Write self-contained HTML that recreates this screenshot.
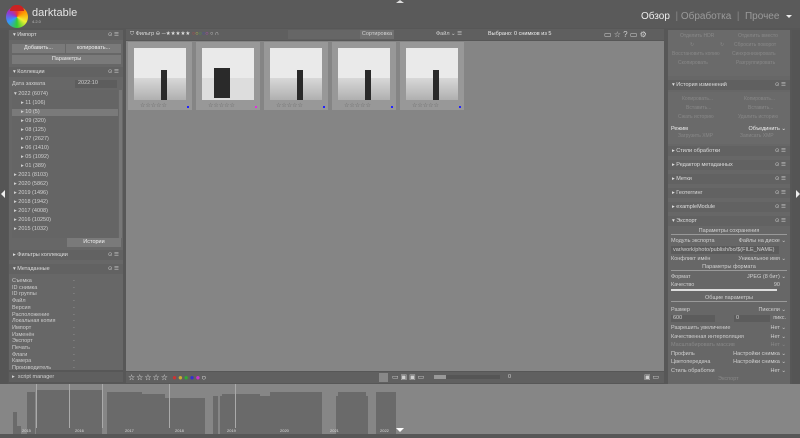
<!DOCTYPE html>
<html><head><meta charset="utf-8"><style>
*{margin:0;padding:0;box-sizing:border-box}
body{width:800px;height:438px;background:#575757;font-family:"Liberation Sans","DejaVu Sans",sans-serif;font-size:5.5px;color:#d0d0d0;position:relative;overflow:hidden;white-space:nowrap}
.a{position:absolute}
.hdr{left:0;top:0;width:800px;height:28px;background:#5a5a5a}
.lp{left:9px;top:30px;width:114px;height:340px;background:#676767}
.rp{left:668px;top:30px;width:122px;height:355px;background:#676767}
.ctr{left:126px;top:41px;width:538px;height:330px;background:#858585}
.sec{background:#626262;height:10px;width:100%;padding-left:4px;line-height:10px;color:#ddd}
.sec:after{content:"⊙ ☰";position:absolute;right:4px;top:0;color:#ccc}
.btn{background:#7a7a7a;height:9px;line-height:9px;text-align:center;color:#eee}
.th{top:42px;width:64px;height:68px;background:#989898}
.th .im{position:absolute;left:6px;top:6px;width:52px;height:52px;background:#eaeaea;overflow:hidden}
.th .im i{position:absolute;left:27px;top:22px;width:6px;height:30px;background:#2a2a2a}
.th .im b{position:absolute;left:0;top:30px;width:52px;height:22px;background:linear-gradient(#d8d8d8,#b0b0b0)}
.th s{position:absolute;left:12px;bottom:1px;text-decoration:none;color:#666;font-size:6px}
.th u{position:absolute;right:3px;bottom:2px;width:2px;height:2px;background:#22f}
.row{position:absolute;left:0;width:120px;height:7px;line-height:7px;padding-left:12px}
.tl{left:0;top:384px;width:800px;height:50px;background:#868686}
.bar{position:absolute;bottom:0;background:#6a6a6a}
.v{position:absolute;right:4px}
</style></head><body>
<div class="a hdr"></div>
<div class="a" style="left:6px;top:6px;width:22px;height:22px;border-radius:50%;background:conic-gradient(#e33,#f90,#ee3,#3c3,#39f,#93c,#e33)"></div>
<div class="a" style="left:10px;top:5px;width:14px;height:6px;background:#c22;border-radius:6px 6px 0 0"></div>
<div class="a" style="left:32px;top:7px;font-size:11px;color:#e4e4e4">darktable</div>
<div class="a" style="left:32px;top:19px;font-size:4px;color:#bbb">4.2.0</div>
<div class="a" style="left:641px;top:11px;font-size:10px;color:#eee">Обзор <span style="color:#888">&nbsp;|&nbsp;</span><span style="color:#9a9a9a">Обработка</span><span style="color:#888"> &nbsp;|&nbsp; </span><span style="color:#9a9a9a">Прочее</span></div>
<div class="a" style="left:786px;top:15px;border:3px solid transparent;border-top:3px solid #eee"></div>
<div class="a" style="left:396px;top:0;border:4px solid transparent;border-bottom:3px solid #ddd;border-top:0"></div>
<!-- filter bar -->
<div class="a" style="left:126px;top:29px;width:538px;height:11px;background:#5f5f5f"></div>
<div class="a" style="left:130px;top:31px;color:#ddd">⛉ Фильтр ⊖ ─★★★★★ <span style="color:#c44">○</span><span style="color:#cc4">○</span><span style="color:#4a4">○</span><span style="color:#44c">○</span><span style="color:#c4c">○</span> ○ ∩</div>
<div class="a" style="left:288px;top:30px;width:72px;height:9px;background:#666"></div>
<div class="a" style="left:360px;top:30px;width:34px;height:9px;background:#707070;text-align:center;line-height:9px">Сортировка</div>
<div class="a" style="left:436px;top:31px">Файл ⌄ ☰</div>
<div class="a" style="left:488px;top:31px;color:#eee">Выбрано: 0 снимков из 5</div>
<div class="a" style="left:604px;top:30px;font-size:8px">▭ ☆ ? ▭ ⚙</div>
<!-- left panel -->
<div class="a" style="left:0;top:30px;width:8px;height:355px;background:#555"></div>
<div class="a" style="left:1px;top:190px;border:4px solid transparent;border-right:4px solid #eee;border-left:0"></div>
<div class="a lp">
<div class="a sec" style="top:0">▾ Импорт</div>
<div class="a btn" style="left:3px;top:14px;width:53px">Добавить...</div>
<div class="a btn" style="left:57px;top:14px;width:55px">копировать...</div>
<div class="a btn" style="left:3px;top:25px;width:109px">Параметры</div>
<div class="a sec" style="top:37px">▾ Коллекции</div>
<div class="a" style="left:3px;top:51px">Дата захвата</div>
<div class="a" style="left:66px;top:50px;width:42px;height:8px;background:#5d5d5d;padding-left:3px">2022:10</div>
<div class="a" style="left:3px;top:60px;width:106px;height:148px;background:#656565"></div>
<div class="a" style="left:110px;top:60px;width:3px;height:148px;background:#777"></div>
<div class="row" style="top:61px;padding-left:5px">▾ 2022 (6074)</div>
<div class="row" style="top:70px">▸ 11 (106)</div>
<div class="row" style="top:79px;background:#7a7a7a;width:106px;left:3px;padding-left:9px">▸ 10 (5)</div>
<div class="row" style="top:88px">▸ 09 (320)</div>
<div class="row" style="top:97px">▸ 08 (125)</div>
<div class="row" style="top:106px">▸ 07 (2627)</div>
<div class="row" style="top:115px">▸ 06 (1410)</div>
<div class="row" style="top:124px">▸ 05 (1092)</div>
<div class="row" style="top:133px">▸ 01 (389)</div>
<div class="row" style="top:142px;padding-left:5px">▸ 2021 (8103)</div>
<div class="row" style="top:151px;padding-left:5px">▸ 2020 (5862)</div>
<div class="row" style="top:160px;padding-left:5px">▸ 2019 (1496)</div>
<div class="row" style="top:169px;padding-left:5px">▸ 2018 (1942)</div>
<div class="row" style="top:178px;padding-left:5px">▸ 2017 (4008)</div>
<div class="row" style="top:187px;padding-left:5px">▸ 2016 (10250)</div>
<div class="row" style="top:196px;padding-left:5px">▸ 2015 (1032)</div>
<div class="a btn" style="left:58px;top:208px;width:54px">Истории</div>
<div class="a sec" style="top:220px">▸ Фильтры коллекции</div>
<div class="a sec" style="top:234px">▾ Метаданные</div>
<div class="a" style="left:3px;top:248px;line-height:6.7px;color:#ccc">Съемка<br>ID снимка<br>ID группы<br>Файл<br>Версия<br>Расположение<br>Локальная копия<br>Импорт<br>Изменён<br>Экспорт<br>Печать<br>Флаги<br>Камера<br>Производитель</div>
<div class="a" style="left:64px;top:248px;line-height:6.7px;color:#aaa">-<br>-<br>-<br>-<br>-<br>-<br>-<br>-<br>-<br>-<br>-<br>-<br>-<br>-</div>
</div>
<div class="a" style="left:9px;top:372px;width:114px;height:10px;background:#5f5f5f;padding-left:3px;line-height:10px">▸ &nbsp;script manager</div>
<!-- center -->
<div class="a ctr"></div>
<div class="a th" style="left:128px"><div class="im"><b></b><i></i></div><s>☆☆☆☆☆</s><u></u></div>
<div class="a th" style="left:196px"><div class="im"><b style="background:#ddd"></b><i style="left:12px;width:16px;top:20px"></i></div><s>☆☆☆☆☆</s><u style="background:#d3d"></u></div>
<div class="a th" style="left:264px"><div class="im"><b></b><i></i></div><s>☆☆☆☆☆</s><u></u></div>
<div class="a th" style="left:332px"><div class="im"><b></b><i></i></div><s>☆☆☆☆☆</s><u></u></div>
<div class="a th" style="left:400px"><div class="im"><b></b><i></i></div><s>☆☆☆☆☆</s><u></u></div>
<!-- bottom toolbar -->
<div class="a" style="left:126px;top:372px;width:538px;height:11px;background:#606060"></div>
<div class="a" style="left:128px;top:373px;font-size:8px;color:#eee;letter-spacing:1px">☆☆☆☆☆ <span style="color:#c33">●</span><span style="color:#ca3">●</span><span style="color:#3a3">●</span><span style="color:#33c">●</span><span style="color:#c3c">●</span>○</div>
<div class="a" style="left:379px;top:373px;width:9px;height:9px;background:#888"></div>
<div class="a" style="left:392px;top:373px;font-size:7px">▭ ▣ ▣ ▭</div>
<div class="a" style="left:434px;top:375px;width:66px;height:4px;background:#555"></div>
<div class="a" style="left:434px;top:375px;width:12px;height:4px;background:#999"></div>
<div class="a" style="left:508px;top:374px">0</div>
<div class="a" style="left:644px;top:373px;font-size:7px">▣ ▭</div>
<!-- right panel -->
<div class="a" style="left:792px;top:30px;width:8px;height:355px;background:#555"></div>
<div class="a" style="left:796px;top:190px;border:4px solid transparent;border-left:4px solid #eee;border-right:0"></div>
<div class="a rp">
<div class="a" style="left:0;top:0;width:122px;height:46px;background:#6a6a6a;color:#888;font-size:5px">
<span class="a" style="left:12px;top:3px">Отделить HDR</span><span class="a" style="left:70px;top:3px">Отделить вместо</span>
<span class="a" style="left:22px;top:12px">↻</span><span class="a" style="left:52px;top:12px">↻</span><span class="a" style="left:66px;top:12px">Сбросить поворот</span>
<span class="a" style="left:4px;top:21px">Восстановить копию</span><span class="a" style="left:64px;top:21px">Синхронизировать</span>
<span class="a" style="left:10px;top:30px">Скопировать</span><span class="a" style="left:68px;top:30px">Разгруппировать</span></div>
<div class="a sec" style="top:50px;background:#606060">▾ История изменений</div>
<div class="a" style="left:0;top:62px;width:122px;height:52px;background:#6a6a6a;color:#888;font-size:5px">
<span class="a" style="left:14px;top:4px">Копировать...</span><span class="a" style="left:76px;top:4px">Копировать...</span>
<span class="a" style="left:18px;top:13px">Вставить...</span><span class="a" style="left:80px;top:13px">Вставить...</span>
<span class="a" style="left:10px;top:22px">Сжать историю</span><span class="a" style="left:70px;top:22px">Удалить историю</span>
<span class="a" style="left:10px;top:41px">Загрузить XMP</span><span class="a" style="left:72px;top:41px">Записать XMP</span></div>
<div class="a" style="left:3px;top:96px;color:#eee">Режим</div>
<div class="v" style="top:96px;color:#eee">Объединить ⌄</div>
<div class="a sec" style="top:116px">▸ Стили обработки</div>
<div class="a sec" style="top:130px">▸ Редактор метаданных</div>
<div class="a sec" style="top:144px">▸ Метки</div>
<div class="a sec" style="top:158px">▸ Геотеггинг</div>
<div class="a sec" style="top:172px">▸ exampleModule</div>
<div class="a sec" style="top:186px">▾ Экспорт</div>
<div class="a" style="left:3px;top:198px;width:116px;text-align:center;border-bottom:1px solid #999">Параметры сохранения</div>
<div class="a" style="left:3px;top:208px">Модуль экспорта</div><div class="v" style="top:208px">Файлы на диске ⌄</div>
<div class="a" style="left:3px;top:216px;width:108px;height:8px;background:#5c5c5c;padding-left:2px;line-height:8px;overflow:hidden">var/work/photo/publish/bo/$(FILE_NAME)</div>
<div class="a" style="left:3px;top:226px">Конфликт имён</div><div class="v" style="top:226px">Уникальное имя ⌄</div>
<div class="a" style="left:3px;top:234px;width:116px;text-align:center;border-bottom:1px solid #999">Параметры формата</div>
<div class="a" style="left:3px;top:244px">Формат</div><div class="v" style="top:244px">JPEG (8 бит) ⌄</div>
<div class="a" style="left:3px;top:252px">Качество</div><div class="v" style="top:252px;right:10px">90</div>
<div class="a" style="left:3px;top:259px;width:106px;height:2px;background:#ddd"></div>
<div class="a" style="left:3px;top:265px;width:116px;text-align:center;border-bottom:1px solid #999">Общие параметры</div>
<div class="a" style="left:3px;top:277px">Размер</div><div class="v" style="top:277px">Пиксели ⌄</div>
<div class="a" style="left:3px;top:285px;width:44px;height:7px;background:#5c5c5c;padding-left:2px">600</div>
<div class="a" style="left:66px;top:285px;width:36px;height:7px;background:#5c5c5c;padding-left:2px">0</div>
<div class="v" style="top:285px">пикс.</div>
<div class="a" style="left:3px;top:294px;line-height:8.5px">Разрешить увеличение<br>Качественная интерполяция<br><span style="color:#888">Масштабировать массив</span><br>Профиль<br>Цветопередача<br>Стиль обработки</div>
<div class="v" style="top:294px;line-height:8.5px;text-align:right">Нет ⌄<br>Нет ⌄<br><span style="color:#888">Нет ⌄</span><br>Настройки снимка ⌄<br>Настройки снимка ⌄<br>Нет ⌄</div>
<div class="a" style="left:50px;top:346px;color:#888">Экспорт</div>
</div>
<!-- timeline -->
<div class="a tl">
<div class="bar" style="left:13px;width:4px;height:22px"></div>
<div class="bar" style="left:17px;width:4px;height:8px"></div>
<div class="bar" style="left:27px;width:8px;height:42px"></div>
<div class="bar" style="left:36px;width:66px;height:44px"></div>
<div class="bar" style="left:107px;width:35px;height:42px"></div>
<div class="bar" style="left:140px;width:25px;height:40px"></div>
<div class="bar" style="left:165px;width:40px;height:36px"></div>
<div class="bar" style="left:213px;width:5px;height:38px"></div>
<div class="bar" style="left:220px;width:42px;height:38px"></div>
<div class="bar" style="left:222px;width:38px;height:40px"></div>
<div class="bar" style="left:262px;width:8px;height:22px"></div>
<div class="bar" style="left:260px;width:60px;height:38px"></div>
<div class="bar" style="left:270px;width:52px;height:42px"></div>
<div class="bar" style="left:336px;width:32px;height:38px"></div>
<div class="bar" style="left:338px;width:28px;height:42px"></div>
<div class="bar" style="left:376px;width:20px;height:42px"></div>
<div class="a" style="left:36px;top:0;width:1px;height:44px;background:#aaa"></div>
<div class="a" style="left:69px;top:0;width:1px;height:44px;background:#aaa"></div>
<div class="a" style="left:102px;top:0;width:1px;height:44px;background:#aaa"></div>
<div class="a" style="left:169px;top:0;width:1px;height:44px;background:#aaa"></div>
<div class="a" style="left:235px;top:0;width:1px;height:44px;background:#aaa"></div>
<div class="a" style="left:396px;top:44px;border:4px solid transparent;border-top:4px solid #fff"></div>
<div class="a" style="left:0;top:44px;width:800px;font-size:4px;color:#ddd"><span class="a" style="left:22px">2015</span><span class="a" style="left:75px">2016</span><span class="a" style="left:125px">2017</span><span class="a" style="left:175px">2018</span><span class="a" style="left:227px">2019</span><span class="a" style="left:280px">2020</span><span class="a" style="left:330px">2021</span><span class="a" style="left:380px">2022</span></div>
</div>
</body></html>
